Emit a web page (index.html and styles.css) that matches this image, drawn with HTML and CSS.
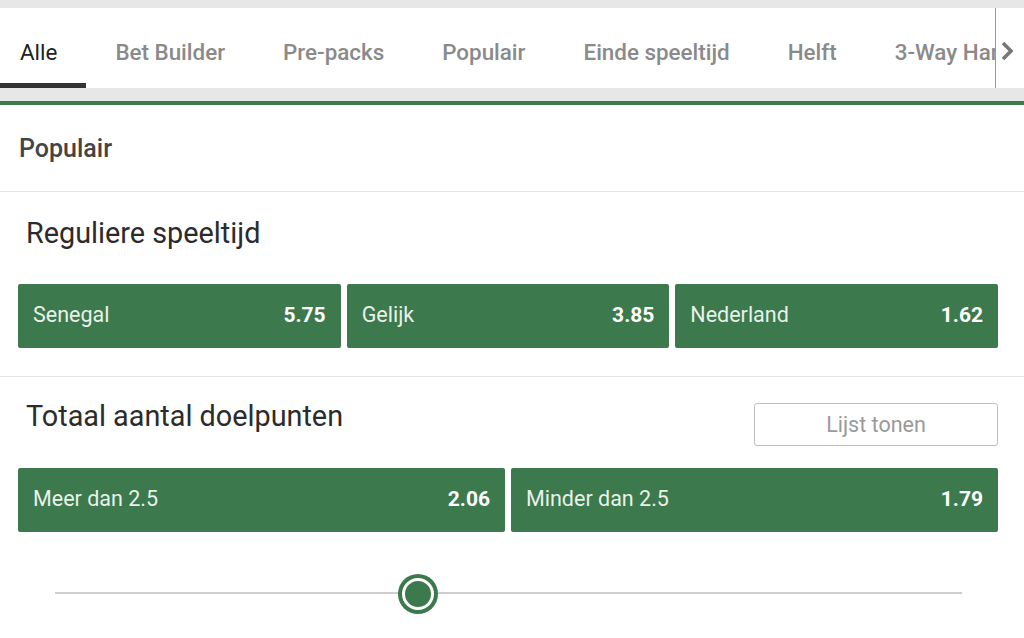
FILE: index.html
```html
<!DOCTYPE html>
<html lang="nl">
<head>
    <meta charset="UTF-8">
    <meta name="viewport" content="width=device-width, initial-scale=1.0">
    <title>Senegal - Nederland</title>
    <link rel="stylesheet" href="styles.css">
</head>
<body>
    <div class="top-strip"></div>
    <nav class="tab-bar">
        <div class="tabs">
            <a class="tab active" href="#">Alle</a>
            <a class="tab" href="#">Bet Builder</a>
            <a class="tab" href="#">Pre-packs</a>
            <a class="tab" href="#">Populair</a>
            <a class="tab" href="#">Einde speeltijd</a>
            <a class="tab" href="#">Helft</a>
            <a class="tab" href="#">3-Way Handicap</a>
        </div>
        <button class="tab-next" aria-label="Volgende">
            <svg width="18" height="22" viewBox="0 0 18 22"><path d="M5 3 L13 11 L5 19" fill="none" stroke="#777" stroke-width="3.6" stroke-linejoin="miter"/></svg>
        </button>
    </nav>
    <div class="sub-strip"></div>

    <div class="group-title">Populair</div>

    <section class="market">
        <div class="market-head">
            <h2>Reguliere speeltijd</h2>
        </div>
        <div class="odds-row">
            <button class="odd"><span>Senegal</span><b>5.75</b></button>
            <button class="odd"><span>Gelijk</span><b>3.85</b></button>
            <button class="odd"><span>Nederland</span><b>1.62</b></button>
        </div>
    </section>

    <section class="market market-last">
        <div class="market-head">
            <h2>Totaal aantal doelpunten</h2>
            <button class="list-button">Lijst tonen</button>
        </div>
        <div class="odds-row">
            <button class="odd"><span>Meer dan 2.5</span><b>2.06</b></button>
            <button class="odd"><span>Minder dan 2.5</span><b>1.79</b></button>
        </div>
        <div class="slider">
            <div class="slider-track"></div>
            <div class="slider-knob"></div>
        </div>
    </section>
</body>
</html>
```

FILE: styles.css
```css
:root {
    --green: #3c794c;
    --strip: #e7e7e7;
    --line: #e4e4e4;
    --tab-color: #8a8a8a;
}
body {
    margin: 0;
    background: #fff;
    font-family: Roboto, "Liberation Sans", sans-serif;
    color: #333;
}
.top-strip {
    height: 8px;
    background: var(--strip);
}
.tab-bar {
    display: flex;
    height: 80px;
    background: #fff;
}
.tabs {
    display: flex;
    flex: 1;
    overflow: hidden;
    white-space: nowrap;
    border-right: 1px solid #999;
}
.tab {
    display: block;
    box-sizing: border-box;
    height: 80px;
    padding: 0 29px;
    line-height: 88px;
    font-size: 22.4px;
    font-weight: 500;
    color: var(--tab-color);
    text-decoration: none;
    border-bottom: 5px solid transparent;
}
.tab:first-child {
    padding-left: 20px;
}
.tab.active {
    color: #222;
    font-weight: 400;
    border-bottom-color: #333;
}
.tab-next {
    width: 28px;
    padding: 6px 0 0 2px;
    border: none;
    background: #fff;
    display: flex;
    align-items: center;
}
.sub-strip {
    height: 13px;
    background: var(--strip);
    border-bottom: 4px solid var(--green);
}
.group-title {
    height: 86px;
    display: flex;
    align-items: center;
    padding-left: 19px;
    font-size: 25px;
    font-weight: 500;
    color: #444;
    border-bottom: 1px solid var(--line);
}
.market {
    padding: 24px 26px 28px 18px;
    border-bottom: 1px solid var(--line);
}
.market-last {
    border-bottom: none;
    padding-top: 22px;
}
.market-head {
    display: flex;
    justify-content: space-between;
    align-items: flex-start;
    padding-left: 8px;
}
.market-head h2 {
    margin: 0;
    font-size: 28.8px;
    line-height: 34px;
    font-weight: 400;
    color: #2b2b2b;
}
.market .odds-row {
    margin-top: 34px;
}
.market-last .odds-row {
    margin-top: 22px;
}
.list-button {
    width: 244px;
    height: 43px;
    margin-top: 4px;
    border: 1.5px solid #bdbdbd;
    border-radius: 3px;
    background: #fff;
    font-family: inherit;
    font-size: 21.5px;
    color: #9a9a9a;
}
.odds-row {
    display: flex;
    gap: 6px;
}
.odd {
    flex: 1;
    height: 64px;
    display: flex;
    justify-content: space-between;
    align-items: center;
    padding: 0 15px 3px;
    border: none;
    border-radius: 2px;
    background: var(--green);
    font-family: inherit;
    font-size: 21.5px;
    color: #e9f1ea;
}
.odd b {
    color: #fff;
    font-weight: 700;
    font-size: 21px;
}
.slider {
    position: relative;
    height: 50px;
    margin: 36px 36px 0 37px;
}
.slider-track {
    position: absolute;
    left: 0;
    right: 0;
    top: 24px;
    height: 2px;
    background: #cfcfcf;
}
.slider-knob {
    position: absolute;
    left: 347px;
    top: 10px;
    width: 26px;
    height: 26px;
    border-radius: 50%;
    background: var(--green);
    border: 3px solid #fff;
    box-shadow: 0 0 0 4px var(--green);
}
```
